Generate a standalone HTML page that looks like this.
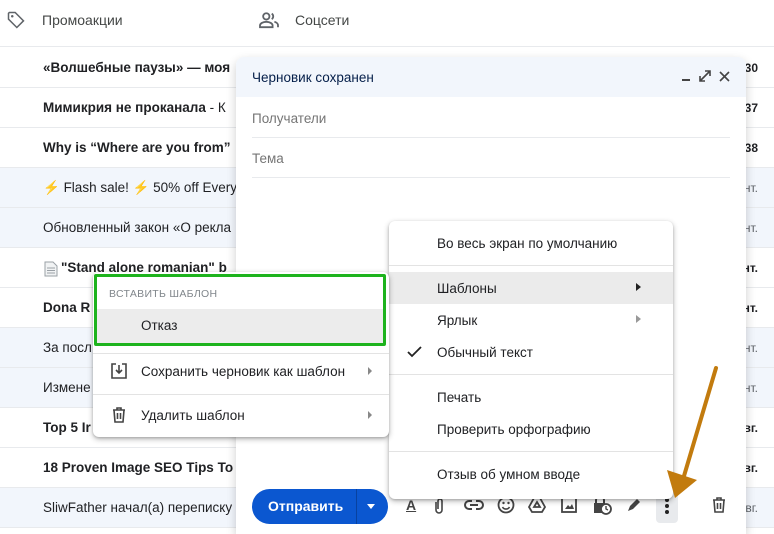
<!DOCTYPE html>
<html><head><meta charset="utf-8"><style>
*{margin:0;padding:0;box-sizing:border-box}
body{width:774px;height:534px;overflow:hidden;background:#fff;font-family:"Liberation Sans",Arial,sans-serif;color:#202124;position:relative}
.a{position:absolute}
.row{position:absolute;left:0;width:774px;height:40px;border-bottom:1px solid #e8eaed;font-size:13.5px;line-height:40px;padding-left:43px;white-space:nowrap;color:#202124}
.b{font-weight:bold}
.hl{background:#f2f6fc}
.dt{position:absolute;right:16px;top:0;font-size:12px;color:#5f6368}
.dt.b{color:#202124}
.mi{position:absolute;left:48px;font-size:13.5px;color:#202124}
.menu{background:#fff;border-radius:6px;box-shadow:0 2px 6px rgba(0,0,0,.3),0 1px 2px rgba(0,0,0,.15)}
.sep{position:absolute;left:0;right:0;height:1px;background:#e3e3e3}
</style></head><body>
<div class="a" style="left:0;top:0;width:774px;height:47px;border-bottom:1px solid #e8eaed"></div>
<svg class="a" style="left:6px;top:10px" width="20" height="20" viewBox="0 0 24 24"><path d="M3 4v7l10 10 8-8L11 3H4z" fill="none" stroke="#5f6368" stroke-width="1.8"/><circle cx="7.5" cy="7.5" r="1.5" fill="#5f6368"/></svg>
<div class="a" style="left:42px;top:12px;font-size:14px;color:#444746">Промоакции</div>
<svg class="a" style="left:258px;top:11px" width="22" height="18" viewBox="0 0 24 20"><circle cx="9" cy="6" r="3.5" fill="none" stroke="#5f6368" stroke-width="2"/><path d="M2 18v-2c0-2 3-4 7-4s7 2 7 4v2z" fill="none" stroke="#5f6368" stroke-width="2"/><path d="M15 3a3.5 3.5 0 010 6M18 12c2 .5 4 2 4 4v2" fill="none" stroke="#5f6368" stroke-width="2"/></svg>
<div class="a" style="left:295px;top:12px;font-size:14px;color:#444746">Соцсети</div>

<div class="row b" style="top:48px">«Волшебные паузы» — моя<span class="dt b">30</span></div>
<div class="row" style="top:88px"><b>Мимикрия не проканала</b> - К<span class="dt b">37</span></div>
<div class="row b" style="top:128px">Why is “Where are you from”<span class="dt b">38</span></div>
<div class="row hl" style="top:168px"><span style="color:#f4b400">⚡</span> Flash sale! <span style="color:#f4b400">⚡</span> 50% off Every<span class="dt">нт.</span></div>
<div class="row hl" style="top:208px">Обновленный закон «О рекла<span class="dt">нт.</span></div>
<div class="row b" style="top:248px"><span style="display:inline-block;width:18px"></span>"Stand alone romanian" b<span class="dt b">нт.</span></div>
<svg class="a" style="left:44px;top:261px" width="14" height="16" viewBox="0 0 14 16"><path d="M1 1h8l4 4v10H1z" fill="#f1f3f4" stroke="#9aa0a6"/><path d="M3 7h8M3 9.5h8M3 12h8" stroke="#9aa0a6"/></svg>
<div class="row b" style="top:288px">Dona R<span class="dt b">нт.</span></div>
<div class="row hl" style="top:328px">За посл<span class="dt">нт.</span></div>
<div class="row hl" style="top:368px">Измене<span class="dt">нт.</span></div>
<div class="row b" style="top:408px">Top 5 Ir<span class="dt b">вг.</span></div>
<div class="row b" style="top:448px">18 Proven Image SEO Tips To<span class="dt b">вг.</span></div>
<div class="row hl" style="top:488px">SliwFather начал(а) переписку<span class="dt">вг.</span></div>

<!-- compose -->
<div class="a" style="left:236px;top:57px;width:510px;height:477px;background:#fff;box-shadow:0 4px 10px rgba(0,0,0,.2);border-radius:8px 8px 0 0">
 <div class="a" style="left:0;top:0;width:510px;height:40px;background:#f2f6fc;border-radius:8px 8px 0 0"></div>
 <div class="a" style="left:16px;top:13px;font-size:13.5px;color:#041e49">Черновик сохранен</div>
 <div class="a" style="left:446px;top:22px;width:8px;height:2px;background:#444"></div>
 <svg class="a" style="left:463px;top:13px" width="12" height="12" viewBox="0 0 12 12"><path d="M1 11L11 1M6 1h5v5M1 6v5h5" fill="none" stroke="#444" stroke-width="1.6"/></svg>
 <svg class="a" style="left:483px;top:14px" width="11" height="11" viewBox="0 0 11 11"><path d="M1 1l9 9M10 1l-9 9" stroke="#444" stroke-width="1.6"/></svg>
 <div class="a" style="left:16px;top:54px;font-size:13.5px;color:#757575">Получатели</div>
 <div class="a" style="left:16px;top:80px;width:478px;height:1px;background:#e8eaed"></div>
 <div class="a" style="left:16px;top:94px;font-size:13.5px;color:#757575">Тема</div>
 <div class="a" style="left:16px;top:120px;width:478px;height:1px;background:#e8eaed"></div>
 <div class="a" style="left:16px;top:432px;width:136px;height:35px;background:#0b57d0;border-radius:18px"></div>
 <div class="a" style="left:32px;top:441px;font-size:14px;font-weight:bold;color:#fff">Отправить</div>
 <div class="a" style="left:120px;top:432px;width:1px;height:35px;background:#0842a0"></div>
 <div class="a" style="left:131px;top:447px;border-left:4px solid transparent;border-right:4px solid transparent;border-top:5px solid #fff"></div>
 <div class="a" style="left:170px;top:440px;font-size:14px;color:#444;text-decoration:underline;font-weight:bold">A</div>
 <svg class="a" style="left:196px;top:440px" width="14" height="18" viewBox="0 0 14 18"><path d="M4 5v8a3 3 0 006 0V4a2 2 0 00-4 0v8" fill="none" stroke="#444" stroke-width="1.6"/></svg>
 <svg class="a" style="left:228px;top:442px" width="20" height="12" viewBox="0 0 20 12"><path d="M8 2H5a4 4 0 000 8h3M12 2h3a4 4 0 010 8h-3M6 6h8" fill="none" stroke="#444" stroke-width="2"/></svg>
 <svg class="a" style="left:261px;top:439px" width="18" height="18" viewBox="0 0 18 18"><circle cx="9" cy="9" r="7.5" fill="none" stroke="#444" stroke-width="1.8"/><circle cx="6.5" cy="7" r="1.2" fill="#444"/><circle cx="11.5" cy="7" r="1.2" fill="#444"/><path d="M5.5 11a4 4 0 007 0" fill="none" stroke="#444" stroke-width="1.6"/></svg>
 <svg class="a" style="left:292px;top:440px" width="18" height="16" viewBox="0 0 18 16"><path d="M6 1h6l5 9-3 5H4l-3-5z M6 10h6L9 5z" fill="none" stroke="#444" stroke-width="1.8"/></svg>
 <svg class="a" style="left:325px;top:440px" width="16" height="16" viewBox="0 0 16 16"><rect x="1" y="1" width="14" height="14" fill="none" stroke="#444" stroke-width="1.8"/><path d="M4 12l3-4 2 2 2-3 2 5z" fill="#444"/></svg>
 <svg class="a" style="left:356px;top:438px" width="20" height="20" viewBox="0 0 20 20"><path d="M4 8V5a4 4 0 018 0v3" fill="none" stroke="#444" stroke-width="2"/><rect x="2" y="8" width="11" height="10" fill="#444"/><circle cx="14" cy="14" r="5" fill="#fff" stroke="#444" stroke-width="1.8"/><path d="M14 11v3l2 1" fill="none" stroke="#444" stroke-width="1.4"/></svg>
 <svg class="a" style="left:390px;top:440px" width="16" height="16" viewBox="0 0 16 16"><path d="M2 14l2-5 7-7 3 3-7 7z" fill="#444"/></svg>
 <div class="a" style="left:420px;top:433px;width:22px;height:33px;background:#e8eaed;border-radius:4px"></div>
 <div class="a" style="left:429px;top:441px;width:4px;height:4px;border-radius:2px;background:#222;box-shadow:0 6px 0 #222,0 12px 0 #222"></div>
 <svg class="a" style="left:476px;top:440px" width="14" height="16" viewBox="0 0 14 16"><path d="M1 3h12M5 3V1h4v2M2 3l1 12h8l1-12M5.5 6v6M8.5 6v6" fill="none" stroke="#444" stroke-width="1.6"/></svg>
</div>

<!-- main menu -->
<div class="a menu" style="left:389px;top:221px;width:284px;height:278px">
 <div class="mi" style="top:15px">Во весь экран по умолчанию</div>
 <div class="sep" style="top:44px"></div>
 <div class="a" style="left:0;top:51px;width:284px;height:32px;background:#ebebeb"></div>
 <div class="mi" style="top:60px">Шаблоны</div>
 <div class="a" style="left:247px;top:62px;border-top:4px solid transparent;border-bottom:4px solid transparent;border-left:5px solid #222"></div>
 <div class="mi" style="top:92px">Ярлык</div>
 <div class="a" style="left:247px;top:94px;border-top:4px solid transparent;border-bottom:4px solid transparent;border-left:5px solid #999"></div>
 <svg class="a" style="left:18px;top:125px" width="15" height="12" viewBox="0 0 15 12"><path d="M1 6l4 4 9-9" fill="none" stroke="#222" stroke-width="1.8"/></svg>
 <div class="mi" style="top:124px">Обычный текст</div>
 <div class="sep" style="top:153px"></div>
 <div class="mi" style="top:169px">Печать</div>
 <div class="mi" style="top:201px">Проверить орфографию</div>
 <div class="sep" style="top:230px"></div>
 <div class="mi" style="top:246px">Отзыв об умном вводе</div>
</div>

<!-- submenu -->
<div class="a menu" style="left:93px;top:272px;width:296px;height:165px">
 <div class="a" style="left:16px;top:16px;font-size:10.5px;color:#80868b;letter-spacing:.3px">ВСТАВИТЬ ШАБЛОН</div>
 <div class="a" style="left:4px;top:37px;width:288px;height:34px;background:#ececec"></div>
 <div class="a" style="left:48px;top:46px;font-size:13.5px">Отказ</div>
 <div class="sep" style="top:81px"></div>
 <svg class="a" style="left:18px;top:91px" width="16" height="16" viewBox="0 0 16 16"><path d="M5 1H1v14h14V1h-4M8 2v8M5 7l3 3 3-3" fill="none" stroke="#444" stroke-width="1.6"/></svg>
 <div class="a" style="left:48px;top:92px;font-size:13.5px">Сохранить черновик как шаблон</div>
 <div class="a" style="left:275px;top:95px;border-top:4px solid transparent;border-bottom:4px solid transparent;border-left:4px solid #888"></div>
 <div class="sep" style="top:122px"></div>
 <svg class="a" style="left:19px;top:135px" width="14" height="16" viewBox="0 0 14 16"><path d="M1 3h12M5 3V1h4v2M2 3l1 12h8l1-12M5.5 6v6M8.5 6v6" fill="none" stroke="#444" stroke-width="1.6"/></svg>
 <div class="a" style="left:48px;top:136px;font-size:13.5px">Удалить шаблон</div>
 <div class="a" style="left:275px;top:139px;border-top:4px solid transparent;border-bottom:4px solid transparent;border-left:4px solid #888"></div>
</div>
<div class="a" style="left:94px;top:274px;width:292px;height:72px;border:3.5px solid #1db31d;border-radius:2px"></div>

<!-- arrow -->
<svg class="a" style="left:660px;top:360px" width="70" height="145" viewBox="0 0 70 145"><path d="M56 8L24 116" stroke="#c27b0e" stroke-width="4" stroke-linecap="round"/><path d="M7 110l8 28 22-18z" fill="#c27b0e"/></svg>
</body></html>
